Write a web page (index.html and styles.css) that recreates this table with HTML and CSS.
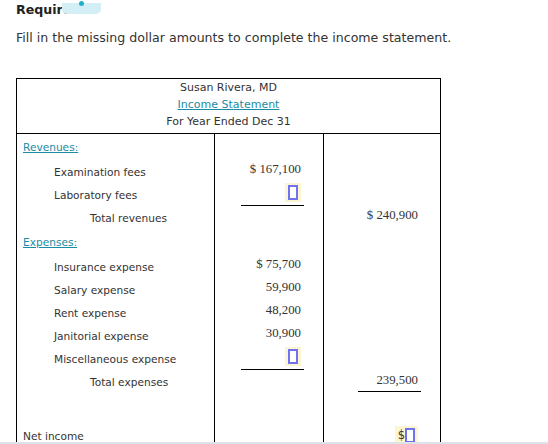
FILE: index.html
```html
<!DOCTYPE html>
<html>
<head>
<meta charset="utf-8">
<link rel="stylesheet" href="styles.css">
</head>
<body>
<div class="page">
  <h2 class="req">Required:</h2>
  <div class="tab-badge"><span class="dot"></span></div>
  <p class="instr">Fill in the missing dollar amounts to complete the income statement.</p>
  <table class="stmt">
    <colgroup><col class="c1"><col class="c2"><col class="c3"></colgroup>
    <tr class="head">
      <td colspan="3">
        <div>Susan Rivera, MD</div>
        <div><span class="link">Income Statement</span></div>
        <div>For Year Ended Dec 31</div>
      </td>
    </tr>
    <tr class="sec"><td class="lbl"><span class="link">Revenues:</span></td><td></td><td></td></tr>
    <tr class="item"><td class="lbl in1">Examination fees</td><td class="num"><div class="amt">$ 167,100</div></td><td></td></tr>
    <tr class="item"><td class="lbl in1">Laboratory fees</td><td class="num"><div class="amt ul"><span class="inp"><span class="box"></span></span></div></td><td></td></tr>
    <tr class="item"><td class="lbl in2">Total revenues</td><td></td><td class="num"><div class="amt">$ 240,900</div></td></tr>
    <tr class="sec"><td class="lbl"><span class="link">Expenses:</span></td><td></td><td></td></tr>
    <tr class="item"><td class="lbl in1">Insurance expense</td><td class="num"><div class="amt">$ 75,700</div></td><td></td></tr>
    <tr class="item"><td class="lbl in1">Salary expense</td><td class="num"><div class="amt">59,900</div></td><td></td></tr>
    <tr class="item"><td class="lbl in1">Rent expense</td><td class="num"><div class="amt">48,200</div></td><td></td></tr>
    <tr class="item"><td class="lbl in1">Janitorial expense</td><td class="num"><div class="amt">30,900</div></td><td></td></tr>
    <tr class="item"><td class="lbl in1">Miscellaneous expense</td><td class="num"><div class="amt ul"><span class="inp"><span class="box"></span></span></div></td><td></td></tr>
    <tr class="item"><td class="lbl in2">Total expenses</td><td></td><td class="num"><div class="amt ul">239,500</div></td></tr>
    <tr class="blank"><td></td><td></td><td></td></tr>
    <tr class="net"><td class="lbl">Net income</td><td></td><td class="num"><div class="amt"><span class="inp">$<span class="box"></span></span></div></td></tr>
  </table>
</div>
<div class="footbar"></div>
</body>
</html>
```
FILE: styles.css
```css
html, body {
  margin: 0;
  padding: 0;
  background: #fff;
}
body {
  color: #333;
  font-family: "DejaVu Sans", sans-serif;
  overflow: hidden;
}
.page {
  position: relative;
  padding: 0 16px;
}
.req {
  margin: 3px 0 0;
  font-size: 12.6px;
  line-height: 13px;
  font-weight: 700;
  color: #222;
}
.tab-badge {
  position: absolute;
  top: 0;
  left: 62px;
  width: 39px;
  height: 11px;
  background: #d3eef4;
  border-radius: 0 0 5px 5px;
}
.dot {
  position: absolute;
  top: -2px;
  left: 17px;
  width: 5px;
  height: 5px;
  border-radius: 50%;
  background: #1fb1c9;
}
.instr {
  margin: 14px 0 0;
  font-size: 12.6px;
  line-height: 16px;
  color: #333;
}
.stmt {
  margin-top: 32px;
  border-collapse: collapse;
  table-layout: fixed;
  width: 425px;
  border: 1px solid #000;
  font-size: 10.6px;
}
.c1 { width: 198px; }
.c2 { width: 109px; }
.c3 { width: 117px; }
.stmt td {
  padding: 0;
  border-left: 1px solid #000;
  border-right: 1px solid #000;
  vertical-align: middle;
}
.head td {
  text-align: center;
  font-size: 11px;
  line-height: 17px;
  padding: 0 0 3px;
  border-bottom: 1px solid #000;
}
.link {
  color: #1b8ca3;
  text-decoration: underline;
}
.sec td { height: 26px; }
.item td { height: 23px; }
.blank td { height: 23px; }
.net td { height: 39px; }
.lbl { padding-left: 6px !important; }
.lbl.in1 { padding-left: 37px !important; }
.lbl.in2 { padding-left: 73px !important; }
.num {
  text-align: right;
  padding-right: 19px !important;
}
.amt {
  display: inline-block;
  vertical-align: middle;
  box-sizing: border-box;
  width: 63px;
  padding: 0 3px 6px 0;
  text-align: right;
  font-family: "Liberation Serif", serif;
  font-size: 12.8px;
  line-height: 16px;
  color: #333;
}
.amt.ul {
  padding-bottom: 3px;
  border-bottom: 1px solid #000;
}
.net .amt {
  padding-bottom: 0;
}
.inp {
  display: inline-block;
  vertical-align: top;
  padding: 2px 3px 2px;
  background: #fcf5d2;
  line-height: 15px;
  font-family: "DejaVu Sans", sans-serif;
  font-size: 11.5px;
}
.box {
  display: inline-block;
  vertical-align: top;
  box-sizing: border-box;
  width: 10px;
  height: 15px;
  margin-left: 2px;
  border: 2px solid #7272ef;
  background: #fff;
}
.inp .box:first-child { margin-left: 0; }
.footbar {
  position: fixed;
  left: 0;
  right: 0;
  bottom: 0;
  height: 2px;
  background: #dde3e6;
}
```
